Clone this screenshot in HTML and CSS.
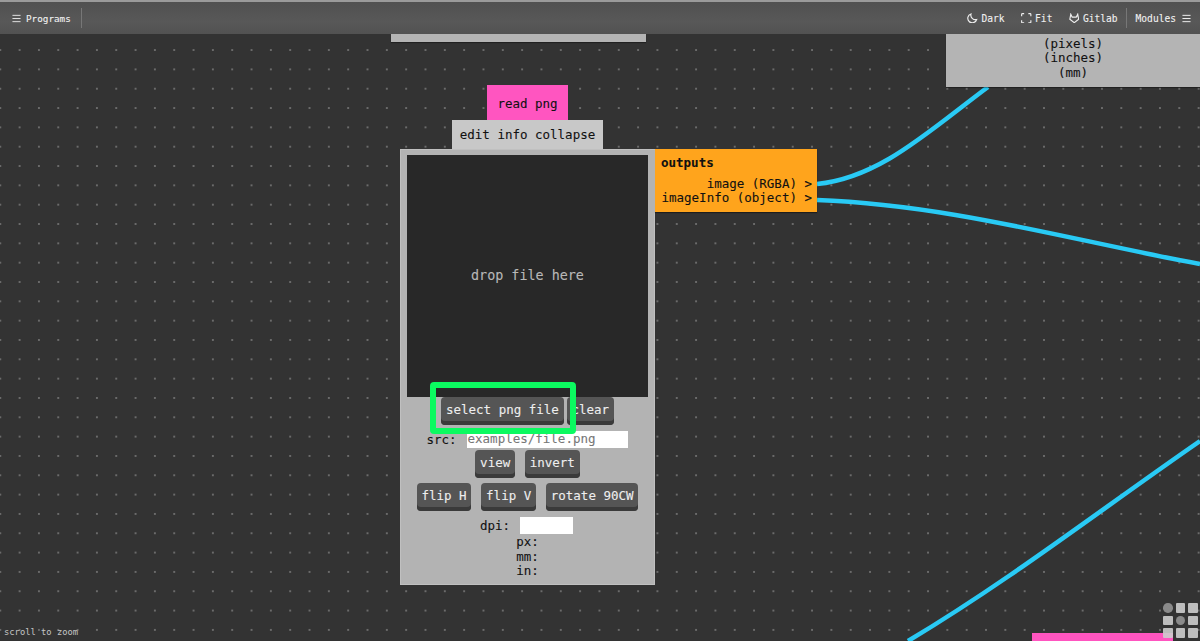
FILE: index.html
```html
<!DOCTYPE html>
<html lang="en">
<head>
<meta charset="utf-8">
<title>Programs</title>
<link rel="stylesheet" href="styles.css">
</head>
<body>
<div class="app">
  <header class="topbar">
    <div class="bar-group">
      <span class="bar-item">
        <svg class="icon" viewBox="0 0 10 10"><path d="M.5 1.5h9M.5 5h9M.5 8.5h9"/></svg>Programs
      </span>
      <span class="divider"></span>
    </div>
    <div class="bar-group right">
      <span class="bar-item">
        <svg class="icon" viewBox="0 0 10 10"><path d="M3.8.9A4.3 4.3 0 1 0 9.2 6.2 4.4 4.4 0 0 1 3.8.9Z"/></svg>Dark
      </span>
      <span class="bar-item">
        <svg class="icon" viewBox="0 0 10 10"><path d="M.6 3V1.4q0-.8.8-.8H3M7 .6h1.6q.8 0 .8.8V3M9.4 7v1.6q0 .8-.8.8H7M3 9.4H1.4q-.8 0-.8-.8V7"/></svg>Fit
      </span>
      <span class="bar-item">
        <svg class="icon" viewBox="0 0 10 10"><path d="M5 9.2 .8 5.9 1.7 1.2 3.1 4h3.8l1.4-2.8.9 4.7Z"/></svg>Gitlab
      </span>
      <span class="divider"></span>
      <span class="bar-item">Modules
        <svg class="icon after" viewBox="0 0 10 10"><path d="M.5 1.5h9M.5 5h9M.5 8.5h9"/></svg>
      </span>
    </div>
  </header>

  <main class="canvas">
    <svg class="wires" viewBox="0 0 1200 641">
      <path d="M817 184C880 178 930 130 988 87"/>
      <path d="M817 200C950 205 1070 240 1200 264"/>
      <path d="M908 641C1010 580 1100 510 1200 441"/>
    </svg>

    <div class="stub stub-top"></div>

    <div class="stub stub-right">
      <span>(pixels)</span>
      <span>(inches)</span>
      <span>(mm)</span>
    </div>

    <section class="node">
      <div class="node-title">read png</div>
      <div class="node-tabs">edit info collapse</div>
      <div class="node-body">
        <div class="drop">drop file here</div>
        <div class="row row-first">
          <button class="btn">select png file</button>
          <button class="btn">clear</button>
        </div>
        <div class="row row-src">
          <label class="field-label">src:</label>
          <span class="src-input">examples/file.png</span>
        </div>
        <div class="row row-view">
          <button class="btn">view</button>
          <button class="btn">invert</button>
        </div>
        <div class="row row-flip">
          <button class="btn">flip H</button>
          <button class="btn">flip V</button>
          <button class="btn">rotate 90CW</button>
        </div>
        <div class="row row-dpi">
          <label class="field-label">dpi:</label>
          <span class="dpi-input"></span>
        </div>
        <div class="stats">
          <span>px:</span>
          <span>mm:</span>
          <span>in:</span>
        </div>
      </div>
      <div class="outputs">
        <strong class="outputs-title">outputs</strong>
        <span>image (RGBA) &gt;</span>
        <span>imageInfo (object) &gt;</span>
      </div>
    </section>

    <div class="highlight"></div>

    <div class="stub stub-pink"></div>

    <div class="minimap">
      <i class="dot"></i><i></i><i></i>
      <i></i><i class="dot"></i><i></i>
      <i></i><i></i><i></i>
    </div>

    <div class="hint">scroll to zoom</div>
  </main>
</div>
</body>
</html>
```
FILE: styles.css
```css
* { box-sizing: border-box; }
html, body { margin: 0; height: 100%; overflow: hidden; }
body {
  font-family: "DejaVu Sans Mono", "Liberation Mono", monospace;
  background: #333;
}
.app { position: relative; width: 1200px; height: 641px; display: flex; flex-direction: column; overflow: hidden; }

.topbar {
  position: relative;
  z-index: 5;
  flex: 0 0 34px;
  display: flex;
  justify-content: space-between;
  align-items: center;
  padding: 0 8px 0 12px;
  background: linear-gradient(#505050, #585858 60%, #525252);
  border-top: 2px solid #9a9a9a;
  color: #f0f0f0;
  font-size: 9.3px;
  -webkit-text-stroke: .1px #f0f0f0;
}
.bar-group { display: flex; align-items: center; }
.bar-group.right { font-size: 9.6px; }
.bar-item { display: flex; align-items: center; gap: 5px; white-space: nowrap; }
.right .bar-item { margin-left: 16.5px; gap: 3.5px; }
.right .divider { margin: 0 0 0 8px; }
.right .divider + .bar-item { margin-left: 9px; gap: 5px; }
.divider { width: 1px; height: 20px; background: #777; margin-left: 10px; }
.icon { width: 9px; height: 9px; fill: none; stroke: #eee; stroke-width: 1; }
.right .icon { width: 10.5px; height: 10.5px; stroke-width: 1.1; }
.right .icon.after { width: 11px; height: 9px; }

.canvas {
  position: relative;
  flex: 1;
  background-color: #333;
  background-image: radial-gradient(circle at center, #6b6b6b 0, #6b6b6b .8px, transparent 1.2px);
  background-size: 19.33px 19.33px;
  background-position: -9.4px 6.4px;
}
.wires { position: absolute; left: 0; top: -34px; width: 1200px; height: 641px; fill: none; stroke: #29caf5; stroke-width: 4.5; }

.stub { position: absolute; background: #b4b4b4; box-shadow: 0 1px 1px rgba(0,0,0,.35); color: #111; }
.stub-top { left: 391px; top: 0; width: 255px; height: 8px; }
.stub-right {
  left: 946px; top: 0; width: 254px; height: 53px;
  padding-top: 2.5px;
  display: flex; flex-direction: column; align-items: center;
  font-size: 12.5px; line-height: 14.5px;
  -webkit-text-stroke: .1px #111;
}
.stub-pink { left: 1032px; top: 599px; width: 141px; height: 8px; background: #ff55c0; box-shadow: none; }

.node { position: absolute; left: 400px; top: 51px; width: 255px; color: #111; font-size: 12.5px; -webkit-text-stroke: .1px currentColor; }
.node-title {
  width: 81px; height: 35px; margin-left: 87px; padding-top: 1px;
  display: flex; align-items: center; justify-content: center;
  background: #ff55c0;
}
.node-tabs {
  width: 151px; height: 29px; margin-left: 52px;
  display: flex; align-items: center; justify-content: center;
  background: #c8c8c8;
  white-space: nowrap;
}
.node-body {
  height: 436px;
  padding: 5px 6px;
  display: flex; flex-direction: column; align-items: center;
  background: #b3b3b3;
  border: 1px solid #c0c0c0;
}
.drop {
  flex: 0 0 242px;
  align-self: stretch;
  display: flex; align-items: center; justify-content: center;
  padding-bottom: 2px;
  background: #282828;
  color: #b8b8b8;
  font-size: 13.4px;
}
.row { display: flex; align-items: center; justify-content: center; }
.btn {
  height: 28px;
  padding: 0 4.75px 3px;
  border: 0;
  border-radius: 4px;
  background: #555;
  box-shadow: inset 0 -4px 0 #3a3a3a;
  color: #eee;
  font: inherit;
  white-space: nowrap;
}
.row-first { gap: 3px; }
.row-src { gap: 10px; height: 17px; margin-top: 6px; margin-left: -1px; line-height: 15px; }
.field-label { display: block; }
.src-input {
  width: 161px; height: 17px; padding-left: 1px;
  background: #fff; color: #777; line-height: 15px;
}
.row-view { gap: 10px; margin-top: 2px; }
.row-flip { gap: 10px; margin-top: 5px; }
.row-dpi { gap: 10px; margin-top: 6px; margin-left: -2px; }
.dpi-input { width: 53px; height: 17px; background: #fff; }
.stats { display: flex; flex-direction: column; align-items: center; margin-top: 1px; line-height: 14.5px; }

.outputs {
  position: absolute; left: 255px; top: 64px;
  width: 162px; height: 63px;
  padding: 7px 5px 0;
  display: flex; flex-direction: column; align-items: flex-end;
  background: #ffa41c;
  box-shadow: 0 1px 1px rgba(0,0,0,.4);
  line-height: 14.5px;
  white-space: nowrap;
}
.outputs-title { align-self: flex-start; margin-bottom: 6px; margin-left: 1px; }

.highlight {
  position: absolute; left: 430px; top: 348px;
  width: 146px; height: 52px;
  border: 6px solid #0bfa60;
  border-radius: 4px;
}

.minimap {
  position: absolute; left: 1163px; top: 569px;
  display: grid; grid-template-columns: repeat(3, 9.5px); grid-auto-rows: 9.5px; gap: 3px;
}
.minimap i { background: rgba(205,205,205,.9); border-radius: 1px; }
.minimap i.dot { background: #8a8a8a; border-radius: 50%; }

.hint {
  position: absolute; left: 4px; bottom: 3px;
  color: #c4c4c4; font-size: 8.8px; line-height: 11px;
}
```
